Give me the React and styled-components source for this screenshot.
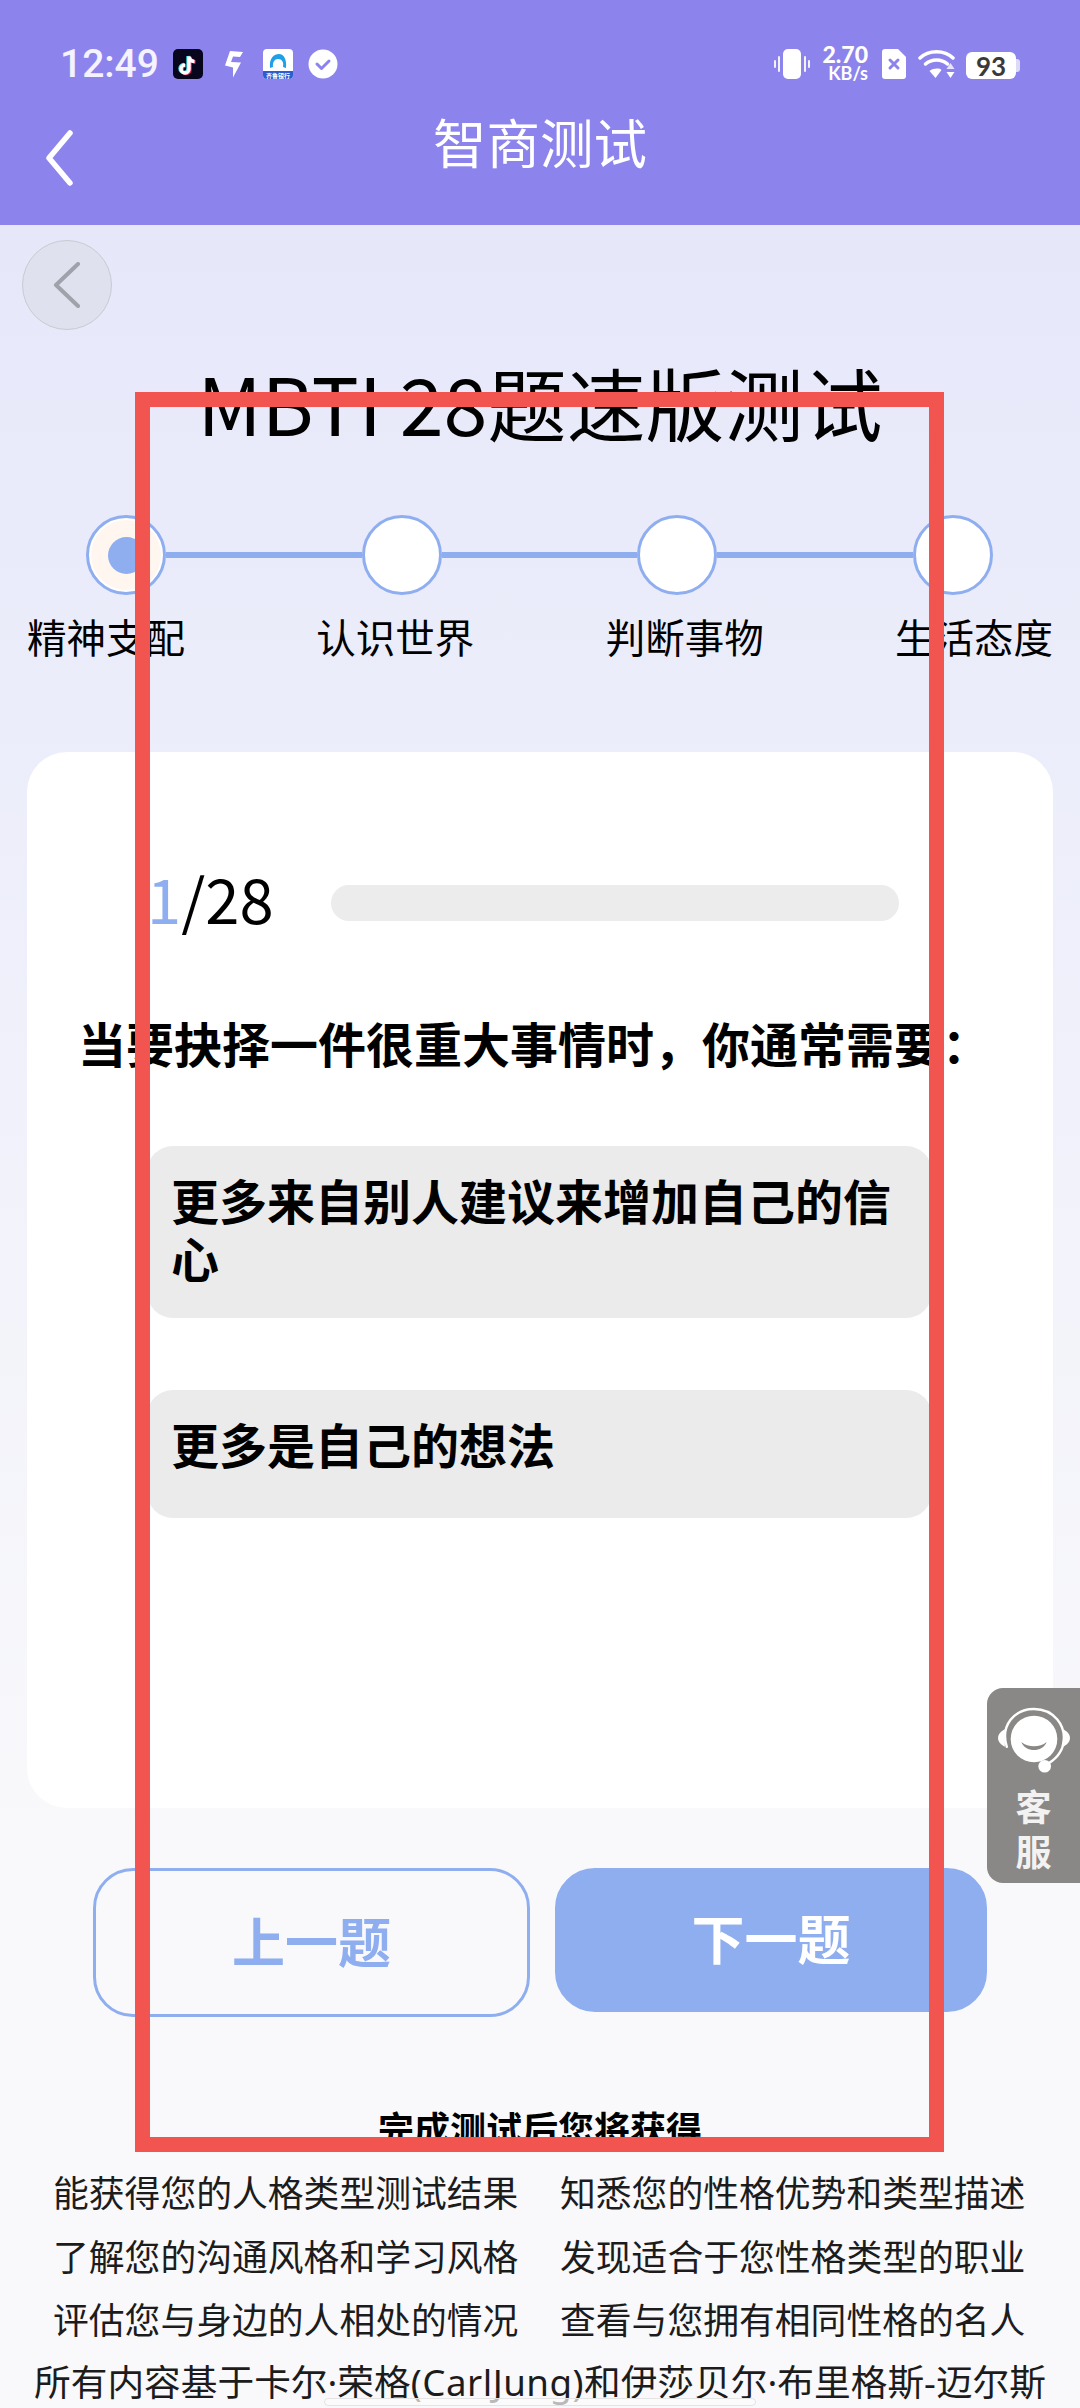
import React from 'react'
import styled, { createGlobalStyle } from 'styled-components'

const GlobalStyle = createGlobalStyle`
  html, body {
    margin: 0;
    padding: 0;
    background: #f9f9fb;
  }
  * {
    box-sizing: border-box;
  }
`

const steps = ['精神支配', '认识世界', '判断事物', '生活态度']
const benefits = [
  '能获得您的人格类型测试结果',
  '知悉您的性格优势和类型描述',
  '了解您的沟通风格和学习风格',
  '发现适合于您性格类型的职业',
  '评估您与身边的人相处的情况',
  '查看与您拥有相同性格的名人',
]

const TikTokIcon = () => (
  <svg width='30' height='30' viewBox='0 0 30 30'>
    <rect width='30' height='30' rx='5' fill='#07061c' />
    <g fill='none' strokeWidth='3.4' strokeLinecap='butt'>
      <path d='M15 7v12.5a4 4 0 1 1-4-4M15 7c.4 3 2.600 4.800 5.500 5' stroke='#3fe0e0' />
      <path d='M17 8v12.500a4 4 0 1 1-4-4M17 8c.4 3 2.600 4.800 5.500 5' stroke='#f0285a' />
      <path d='M16 7.500v12.500a4 4 0 1 1-4-4M16 7.500c.4 3 2.600 4.800 5.500 5' stroke='#fff' />
    </g>
  </svg>
)

const BoltIcon = () => (
  <svg width='21' height='30' viewBox='0 0 21 30'>
    <path d='M7 2l13 1-3 5-7-.5-2 5.500 10 .5-8 15v-10l-8-2z' fill='#fff' />
  </svg>
)

const BankIcon = () => (
  <svg width='30' height='30' viewBox='0 0 30 30'>
    <rect width='30' height='30' rx='4' fill='#fff' />
    <path d='M0 22H30V26a4 4 0 0 1-4 4H4a4 4 0 0 1-4-4z' fill='#2f5bd0' />
    <path d='M7 19C6 9 11 5 16 5c5 0 8 6 7 14l-3-1c1-5-1-8-5-8-3.500 0-5.500 3-5 8z' fill='#1f9fe8' />
    <text x='15' y='28.500' fontSize='6' fontWeight='700' fill='#fff' textAnchor='middle'>齐鲁银行</text>
  </svg>
)

const CheckIcon = () => (
  <svg width='30' height='30' viewBox='0 0 30 30'>
    <circle cx='15' cy='15' r='14.500' fill='#fff' />
    <path d='M9 15l4.500 4.500L21 12' fill='none' stroke='#8c84ec' strokeWidth='3' strokeLinecap='round' strokeLinejoin='round' />
  </svg>
)

const VibrateIcon = () => (
  <svg width='36' height='30' viewBox='0 0 36 30'>
    <rect x='9' y='0' width='18' height='30' rx='5' fill='#fff' />
    <path d='M5 8v14M31 8v14M1 12v6M35 12v6' stroke='#fff' strokeWidth='2' strokeLinecap='round' opacity='.9' />
  </svg>
)

const SimIcon = () => (
  <svg width='24' height='30' viewBox='0 0 24 30'>
    <path d='M3 0H16L24 8V27a3 3 0 0 1-3 3H3a3 3 0 0 1-3-3V3a3 3 0 0 1 3-3z' fill='#fff' />
    <path d='M8 11l8 8M16 11l-8 8' stroke='#8c84ec' strokeWidth='3' strokeLinecap='round' />
  </svg>
)

const WifiIcon = () => (
  <svg width='37' height='30' viewBox='0 0 36 30'>
    <g fill='none' stroke='#fff' strokeWidth='3.500' strokeLinecap='round'>
      <path d='M1.500 9C10 .5 26 .5 34.500 9' />
      <path d='M7 15c6-5.500 16-5.500 22 0' />
    </g>
    <path d='M11 22c4-3 10-3 12 -1l-6 8z' fill='#fff' />
    <path d='M32 14l4 6h-8z' fill='#e6e4fb' />
    <path d='M28 23h8l-4 6z' fill='#fff' />
  </svg>
)

const AgentIcon = () => (
  <svg width='74' height='68' viewBox='0 0 76 70'>
    <circle cx='38' cy='34' r='24' fill='#fff' />
    <path d='M25 37c7 6 19 6 26 0-4 11-22 11-26 0z' fill='#8a8886' />
    <path d='M10 42C3 20 18 3 38 3s34 17 30 36c-1 8-8 17-19 22' fill='none' stroke='#fff' strokeWidth='2.500' strokeLinecap='round' />
    <path d='M8 24c-4 2-7 5-7 9s3 7 7 9z' fill='#fff' />
    <path d='M68 24c4 2 7 5 7 9s-3 7-7 9z' fill='#fff' />
    <circle cx='49' cy='62' r='6.500' fill='#fff' />
  </svg>
)

const App = () => {
  return (
    <Page>
      <GlobalStyle />
      <Header>
        <StatusBar>
          <StatusGroup>
            <Clock>12:49</Clock>
            <StatusSlot $left={13}><TikTokIcon /></StatusSlot>
            <StatusSlot $left={20}><BoltIcon /></StatusSlot>
            <StatusSlot $left={19}><BankIcon /></StatusSlot>
            <StatusSlot $left={15}><CheckIcon /></StatusSlot>
          </StatusGroup>
          <StatusGroup>
            <StatusSlot><VibrateIcon /></StatusSlot>
            <Speed>
              <b>2.70</b>
              <span>KB/s</span>
            </Speed>
            <StatusSlot $left={14}><SimIcon /></StatusSlot>
            <StatusSlot $left={12}><WifiIcon /></StatusSlot>
            <Battery>
              <span>93</span>
            </Battery>
          </StatusGroup>
        </StatusBar>
        <NavBar>
          <NavBack viewBox='0 0 30 56'>
            <path d='M26 3L5 28l21 25' />
          </NavBack>
          <NavTitle>智商测试</NavTitle>
        </NavBar>
      </Header>

      <Main>
        <RoundBack>
          <svg width='28' height='46' viewBox='0 0 28 46'>
            <path d='M25 2L3 23l22 21' fill='none' stroke='#a0a2ab' strokeWidth='4' strokeLinecap='round' strokeLinejoin='round' />
          </svg>
        </RoundBack>
        <PageTitle>MBTI 28题速版测试</PageTitle>

        <StepTrack>
          {steps.map((step, i) => (
            <React.Fragment key={step}>
              {i > 0 && <StepLine />}
              <StepDot $active={i === 0}>{i === 0 && <StepCore />}</StepDot>
            </React.Fragment>
          ))}
        </StepTrack>
        <StepLabels>
          {steps.map((step) => (
            <StepLabel key={step}>{step}</StepLabel>
          ))}
        </StepLabels>

        <Card>
          <ProgressRow>
            <Counter>
              <em>1</em>/28
            </Counter>
            <ProgressBar />
          </ProgressRow>
          <Question>当要抉择一件很重大事情时，你通常需要：</Question>
          <Options>
            <Option>更多来自别人建议来增加自己的信心</Option>
            <Option>更多是自己的想法</Option>
          </Options>
        </Card>

        <Buttons>
          <PrevButton>上一题</PrevButton>
          <NextButton>下一题</NextButton>
        </Buttons>

        <SummaryTitle>完成测试后您将获得</SummaryTitle>
        <BenefitGrid>
          {benefits.map((text) => (
            <span key={text}>{text}</span>
          ))}
        </BenefitGrid>
        <Footnote>
          所有内容基于卡尔·荣格<Latin>(CarlJung)</Latin>和伊莎贝尔·布里格斯-迈尔斯
        </Footnote>
      </Main>

      <ServiceTab>
        <AgentIcon />
        <ServiceText>客</ServiceText>
        <ServiceText>服</ServiceText>
      </ServiceTab>
      <RedFrame />
      <HomeBar />
    </Page>
  )
}

const Page = styled.div`
  position: relative;
  width: 1080px;
  height: 2408px;
  overflow: hidden;
  font-family: 'Noto Sans CJK SC', 'Noto Sans', sans-serif;
  color: #000;
  background: linear-gradient(180deg, #e6e8fa 225px, #f9f9fb 1850px);
`

const Header = styled.header`
  height: 225px;
  background: #8c84ec;
  color: #fff;
`

const StatusBar = styled.div`
  height: 111px;
  padding: 49px 60px 0 60px;
  display: flex;
  align-items: flex-start;
  justify-content: space-between;
`

const StatusGroup = styled.div`
  display: flex;
  align-items: flex-start;
`

const StatusSlot = styled.div`
  display: flex;
  margin-left: ${(props) => props.$left || 0}px;
`

const Clock = styled.span`
  width: 100px;
  font-family: Roboto, sans-serif;
  font-size: 39px;
  font-weight: 500;
  line-height: 30px;
  color: #f4f3ff;
`

const Speed = styled.div`
  width: 46px;
  margin: -4px 0 0 12px;
  display: flex;
  flex-direction: column;
  align-items: flex-end;
  font-family: Lato, sans-serif;
  font-weight: 700;
  line-height: 18px;
  b {
    font-size: 23px;
    line-height: 19px;
  }
  span {
    font-size: 18px;
  }
`

const Battery = styled.div`
  position: relative;
  width: 50px;
  height: 27px;
  margin: 3px 4px 0 11px;
  border-radius: 6px;
  background: #fff;
  display: flex;
  align-items: center;
  justify-content: center;
  font-family: Lato, sans-serif;
  font-size: 26px;
  font-weight: 700;
  color: #3a3a3a;
  &::after {
    content: '';
    position: absolute;
    right: -4px;
    top: 7px;
    width: 4px;
    height: 13px;
    border-radius: 0 3px 3px 0;
    background: #dcdaf8;
  }
`

const NavBar = styled.div`
  position: relative;
  height: 114px;
  display: flex;
  align-items: flex-start;
  justify-content: center;
`

const NavBack = styled.svg`
  position: absolute;
  left: 44px;
  top: 19px;
  width: 30px;
  height: 56px;
  fill: none;
  stroke: #fff;
  stroke-width: 5.500;
  stroke-linecap: round;
  stroke-linejoin: round;
`

const NavTitle = styled.h1`
  margin: 0;
  font-size: 53.500px;
  font-weight: 400;
  line-height: 60px;
`

const Main = styled.main`
  display: flex;
  flex-direction: column;
`

const RoundBack = styled.div`
  width: 90px;
  height: 90px;
  margin: 15px 0 0 22px;
  border-radius: 50%;
  border: 1px solid #c9cad2;
  background: #dfe1ee;
  display: flex;
  align-items: center;
  justify-content: center;
`

const PageTitle = styled.h2`
  margin: 32px 0 0;
  font-size: 79px;
  font-weight: 400;
  line-height: 80px;
  text-align: center;
  white-space: nowrap;
`

const StepTrack = styled.div`
  margin: 73px 87px 0 86px;
  display: flex;
  align-items: center;
`

const StepLine = styled.div`
  flex: 1;
  height: 6px;
  background: #8faef0;
`

const StepDot = styled.div`
  width: 80px;
  height: 80px;
  border-radius: 50%;
  border: 3px solid #8faef0;
  background: ${(props) => (props.$active ? '#fff6f0' : '#fff')};
  display: flex;
  align-items: center;
  justify-content: center;
  ${(props) => props.$active && 'box-shadow: inset 0 0 0 2px #fff;'}
`

const StepCore = styled.div`
  width: 37px;
  height: 37px;
  border-radius: 50%;
  background: #8faef0;
`

const StepLabels = styled.div`
  margin: 16px 27px 0;
  display: flex;
  justify-content: space-between;
`

const StepLabel = styled.span`
  font-size: 39.500px;
  line-height: 50px;
`

const Card = styled.section`
  height: 1056px;
  margin: 91px 27px 0;
  padding-top: 116px;
  border-radius: 40px;
  background: #fff;
`

const ProgressRow = styled.div`
  height: 70px;
  padding: 0 154px 0 120px;
  display: flex;
  align-items: center;
  justify-content: space-between;
`

const Counter = styled.div`
  margin-top: -11px;
  font-size: 61.500px;
  line-height: 70px;
  em {
    font-style: normal;
    color: #8faef0;
  }
`

const ProgressBar = styled.div`
  width: 568px;
  height: 36px;
  border-radius: 18px;
  background: #ececec;
`

const Question = styled.h3`
  margin: 74px 0 0 51px;
  font-size: 48px;
  font-weight: 700;
  line-height: 60px;
  white-space: nowrap;
`

const Options = styled.div`
  margin: 74px 0 0 120px;
  width: 785px;
  display: flex;
  flex-direction: column;
  gap: 72px;
`

const Option = styled.div`
  min-height: 128px;
  padding: 24px 24px 32px;
  border-radius: 26px;
  background: #ebebeb;
  font-size: 48px;
  font-weight: 700;
  line-height: 58px;
`

const Buttons = styled.div`
  margin: 60px 93px 0 93px;
  display: flex;
  align-items: flex-start;
  gap: 25px;
`

const PrevButton = styled.button`
  width: 437px;
  height: 149px;
  padding: 0 0 6px;
  border: 3px solid #8faef0;
  border-radius: 40px;
  background: transparent;
  color: #8faef0;
  font-family: inherit;
  font-size: 53px;
  font-weight: 700;
`

const NextButton = styled(PrevButton)`
  width: 432px;
  height: 144px;
  background: #8faef0;
  color: #fff;
`

const SummaryTitle = styled.div`
  margin-top: 85px;
  font-size: 36px;
  font-weight: 700;
  line-height: 50px;
  text-align: center;
`

const BenefitGrid = styled.div`
  margin: 8px 0 0 53px;
  display: grid;
  grid-template-columns: 468px 468px;
  column-gap: 39px;
  font-size: 35.800px;
  line-height: 63.500px;
  color: #1c1c1c;
  white-space: nowrap;
`

const Footnote = styled.div`
  font-family: 'Noto Sans', 'Noto Sans CJK SC', sans-serif;
  font-size: 36.700px;
  line-height: 63.500px;
  color: #1c1c1c;
  text-align: center;
  white-space: nowrap;
`

const Latin = styled.span`
  letter-spacing: 0.500px;
`

const ServiceTab = styled.aside`
  position: absolute;
  right: 0;
  top: 1688px;
  width: 93px;
  height: 195px;
  padding-top: 18px;
  border-radius: 16px 0 0 16px;
  background: #8a8886;
  display: flex;
  flex-direction: column;
  align-items: center;
  svg {
    margin-bottom: 9px;
  }
`

const ServiceText = styled.span`
  font-size: 36px;
  font-weight: 700;
  line-height: 45px;
  color: #f2f2f2;
`

const RedFrame = styled.div`
  position: absolute;
  left: 135px;
  top: 392px;
  width: 809px;
  height: 1760px;
  border: 15px solid #f2544f;
  pointer-events: none;
`

const HomeBar = styled.div`
  position: absolute;
  left: 324px;
  top: 2398px;
  width: 432px;
  height: 8px;
  border-radius: 4px;
  border: 1px solid #e4e4e4;
  background: rgba(252, 252, 252, 0.7);
`

export default App
